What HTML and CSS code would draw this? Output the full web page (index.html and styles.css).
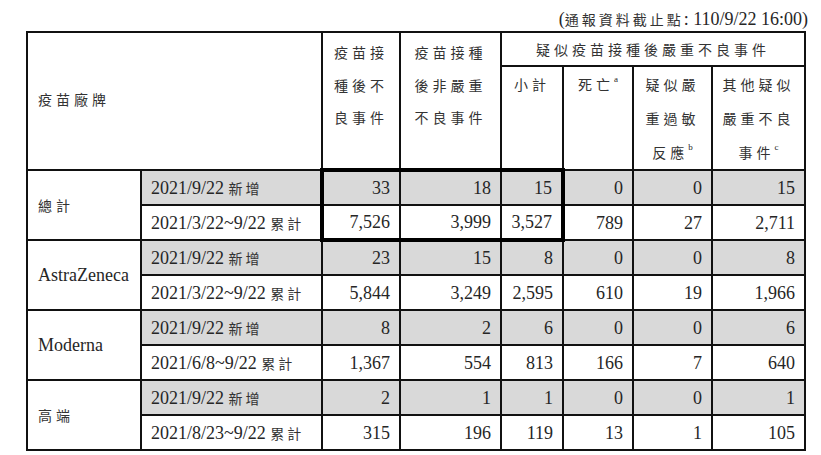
FILE: index.html
```html
<!DOCTYPE html>
<html lang="zh-Hant">
<head>
<meta charset="utf-8">
<title>疫苗接種後不良事件</title>
<link rel="stylesheet" href="styles.css">
</head>
<body>
<div class="page">
  <div class="note">(<span class="cjk">通報資料截止點</span>: 110/9/22 16:00)</div>
  <table class="grid">
    <colgroup>
      <col class="c-brand"><col class="c-date"><col class="c-n1"><col class="c-n2">
      <col class="c-n3"><col class="c-n4"><col class="c-n5"><col class="c-n6">
    </colgroup>
    <thead>
      <tr class="hrow-a">
        <th class="h-brand" rowspan="2" colspan="2"><span class="cjk">疫苗廠牌</span></th>
        <th class="h-top" rowspan="2"><span class="cjk">疫苗接<br>種後不<br>良事件</span></th>
        <th class="h-top" rowspan="2"><span class="cjk">疫苗接種<br>後非嚴重<br>不良事件</span></th>
        <th class="h-group" colspan="4"><span class="cjk">疑似疫苗接種後嚴重不良事件</span></th>
      </tr>
      <tr class="hrow-b">
        <th class="h-sub"><span class="cjk">小計</span></th>
        <th class="h-sub"><span class="cjk">死亡</span><sup>a</sup></th>
        <th class="h-sub"><span class="cjk">疑似嚴<br>重過敏<br>反應</span><sup>b</sup></th>
        <th class="h-sub"><span class="cjk">其他疑似<br>嚴重不良<br>事件</span><sup>c</sup></th>
      </tr>
    </thead>
    <tbody>
      <tr class="new">
        <td class="brand" rowspan="2"><span class="cjk">總計</span></td>
        <td class="date">2021/9/22 <span class="cjk">新增</span></td>
        <td class="num bx-tl">33</td><td class="num bx-t">18</td><td class="num bx-tr">15</td>
        <td class="num">0</td><td class="num">0</td><td class="num">15</td>
      </tr>
      <tr>
        <td class="date">2021/3/22~9/22 <span class="cjk">累計</span></td>
        <td class="num bx-bl">7,526</td><td class="num bx-b">3,999</td><td class="num bx-br">3,527</td>
        <td class="num">789</td><td class="num">27</td><td class="num">2,711</td>
      </tr>
      <tr class="new">
        <td class="brand" rowspan="2">AstraZeneca</td>
        <td class="date">2021/9/22 <span class="cjk">新增</span></td>
        <td class="num">23</td><td class="num">15</td><td class="num">8</td>
        <td class="num">0</td><td class="num">0</td><td class="num">8</td>
      </tr>
      <tr>
        <td class="date">2021/3/22~9/22 <span class="cjk">累計</span></td>
        <td class="num">5,844</td><td class="num">3,249</td><td class="num">2,595</td>
        <td class="num">610</td><td class="num">19</td><td class="num">1,966</td>
      </tr>
      <tr class="new">
        <td class="brand" rowspan="2">Moderna</td>
        <td class="date">2021/9/22 <span class="cjk">新增</span></td>
        <td class="num">8</td><td class="num">2</td><td class="num">6</td>
        <td class="num">0</td><td class="num">0</td><td class="num">6</td>
      </tr>
      <tr>
        <td class="date">2021/6/8~9/22 <span class="cjk">累計</span></td>
        <td class="num">1,367</td><td class="num">554</td><td class="num">813</td>
        <td class="num">166</td><td class="num">7</td><td class="num">640</td>
      </tr>
      <tr class="new">
        <td class="brand" rowspan="2"><span class="cjk">高端</span></td>
        <td class="date">2021/9/22 <span class="cjk">新增</span></td>
        <td class="num">2</td><td class="num">1</td><td class="num">1</td>
        <td class="num">0</td><td class="num">0</td><td class="num">1</td>
      </tr>
      <tr>
        <td class="date">2021/8/23~9/22 <span class="cjk">累計</span></td>
        <td class="num">315</td><td class="num">196</td><td class="num">119</td>
        <td class="num">13</td><td class="num">1</td><td class="num">105</td>
      </tr>
    </tbody>
  </table>
</div>
</body>
</html>
```

FILE: styles.css
```css
html, body {
  margin: 0;
  padding: 0;
  background: #ffffff;
}

body {
  font-family: "Liberation Serif", "Noto Sans CJK TC", serif;
  font-size: 18px;
  color: #262626;
}

.page {
  width: 781px;
  padding: 8px 0 0 26px;
}

.cjk {
  font-family: "Noto Sans CJK TC", "Noto Sans CJK SC", sans-serif;
  font-size: 14px;
  letter-spacing: 4px;
  color: #333333;
}

.note {
  text-align: right;
  line-height: 22px;
  height: 23px;
  margin-right: -1px;
}

.note .cjk {
  letter-spacing: 3px;
}

.grid {
  border-collapse: collapse;
  table-layout: fixed;
  width: 780px;
}

.grid th,
.grid td {
  border: 2px solid #111111;
  padding: 0;
}

.c-brand { width: 114px; }
.c-date { width: 181px; }
.c-n1 { width: 78px; }
.c-n2 { width: 101px; }
.c-n3 { width: 62px; }
.c-n4 { width: 70px; }
.c-n5 { width: 79px; }
.c-n6 { width: 93px; }

.grid th {
  font-weight: normal;
  text-align: center;
  vertical-align: top;
}

.hrow-a { height: 34px; }
.hrow-b { height: 100px; }

.grid .h-brand {
  text-align: left;
  vertical-align: middle;
  padding-left: 10px;
  padding-bottom: 3px;
}

.grid .h-top {
  padding-top: 3px;
  line-height: 32.5px;
}

.grid .h-group {
  vertical-align: middle;
  line-height: 30px;
}

.grid .h-sub {
  line-height: 34px;
  padding-top: 0;
}

.grid sup {
  font-size: 9px;
  line-height: 0;
  vertical-align: 0;
  position: relative;
  top: -8px;
  margin-left: 0;
}

.grid tbody tr {
  height: 35px;
}

.grid td {
  line-height: 20px;
  vertical-align: middle;
}

.grid .new .date,
.grid .new .num {
  background: #d9d9d9;
}

.grid .brand {
  padding-left: 10px;
}

.grid .date {
  padding-left: 9px;
  white-space: nowrap;
}

.date .cjk {
  letter-spacing: 3px;
}

.grid .num {
  text-align: right;
  padding-right: 9px;
}

.grid .bx-tl { border-top: 4px solid #000; border-left: 4px solid #000; }
.grid .bx-t { border-top: 4px solid #000; }
.grid .bx-tr { border-top: 4px solid #000; border-right: 4px solid #000; }
.grid .bx-bl { border-bottom: 4px solid #000; border-left: 4px solid #000; }
.grid .bx-b { border-bottom: 4px solid #000; }
.grid .bx-br { border-bottom: 4px solid #000; border-right: 4px solid #000; }
```
